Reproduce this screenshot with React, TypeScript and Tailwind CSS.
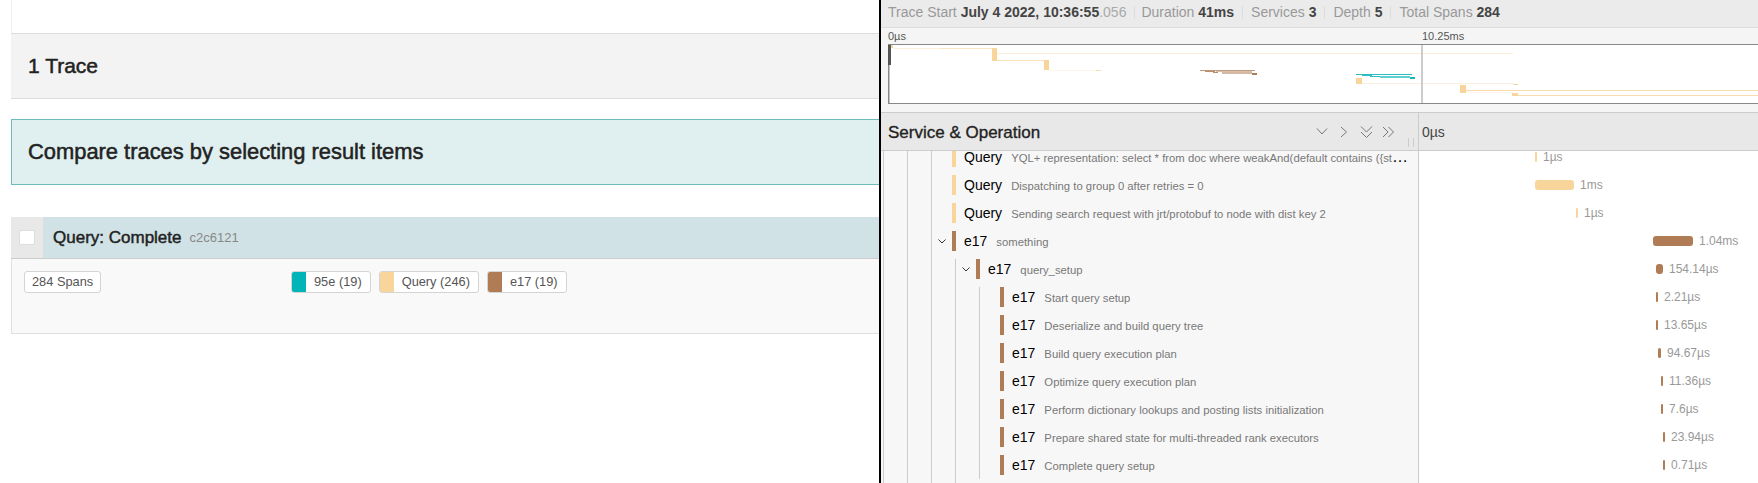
const rows = [
  { depth: 3, service: 'Query', op: 'YQL+ representation: select * from doc where weakAnd(default contains ({stem: false, normalizeCase: false, accentDrop: false}"something"))', color: 'bg-[#f8d59b]', left: 116, width: 2, label: '1µs' },
  { depth: 3, service: 'Query', op: 'Dispatching to group 0 after retries = 0', color: 'bg-[#f8d59b]', left: 116, width: 39, label: '1ms' },
  { depth: 3, service: 'Query', op: 'Sending search request with jrt/protobuf to node with dist key 2', color: 'bg-[#f8d59b]', left: 157, width: 2, label: '1µs' },
  { depth: 3, service: 'e17', op: 'something', color: 'bg-[#b07c55]', left: 234, width: 40, label: '1.04ms', open: true },
  { depth: 4, service: 'e17', op: 'query_setup', color: 'bg-[#b07c55]', left: 237, width: 7, label: '154.14µs', open: true, first: true },
  { depth: 5, service: 'e17', op: 'Start query setup', color: 'bg-[#b07c55]', left: 237, width: 2, label: '2.21µs', first: true },
  { depth: 5, service: 'e17', op: 'Deserialize and build query tree', color: 'bg-[#b07c55]', left: 237, width: 2, label: '13.65µs' },
  { depth: 5, service: 'e17', op: 'Build query execution plan', color: 'bg-[#b07c55]', left: 239, width: 3, label: '94.67µs' },
  { depth: 5, service: 'e17', op: 'Optimize query execution plan', color: 'bg-[#b07c55]', left: 242, width: 2, label: '11.36µs' },
  { depth: 5, service: 'e17', op: 'Perform dictionary lookups and posting lists initialization', color: 'bg-[#b07c55]', left: 242, width: 2, label: '7.6µs' },
  { depth: 5, service: 'e17', op: 'Prepare shared state for multi-threaded rank executors', color: 'bg-[#b07c55]', left: 244, width: 2, label: '23.94µs' },
  { depth: 5, service: 'e17', op: 'Complete query setup', color: 'bg-[#b07c55]', left: 244, width: 2, label: '0.71µs', last: true },
]

const minimap = [
  [891, 45, 2, 3, '#f8d59b'],
  [893, 48, 47, 1, '#fdf0dc'],
  [940, 48, 52, 1, '#fbe6c4'],
  [992, 48, 5, 13, '#f8d59b'],
  [997, 53, 516, 1, '#fbeed8'],
  [997, 60, 47, 1, '#f9dfb5'],
  [1044, 60, 5, 10, '#f8d59b'],
  [1049, 70, 47, 1, '#fef6e8'],
  [1096, 70, 5, 1, '#f9dcae'],
  [1200, 70, 55, 1, '#c09a7c'],
  [1205, 71, 10, 1, '#b98c6a'],
  [1213, 72, 5, 1, '#b98c6a'],
  [1216, 71, 36, 1, '#d8bfac'],
  [1222, 72, 30, 2, '#d4b8a3'],
  [1252, 73, 5, 2, '#b07c55'],
  [1356, 74, 56, 1, '#2dbdc0'],
  [1362, 75, 10, 1, '#2dbdc0'],
  [1370, 76, 10, 1, '#2dbdc0'],
  [1380, 76, 30, 2, '#5fd0d2'],
  [1410, 77, 5, 2, '#1fb5b8'],
  [1356, 78, 6, 6, '#f8d59b'],
  [1362, 83, 151, 1, '#f9efdf'],
  [1513, 84, 5, 1, '#f8d59b'],
  [1460, 85, 6, 8, '#f8d59b'],
  [1466, 90, 292, 1, '#f8dcae'],
  [1466, 92, 47, 1, '#fdf6ea'],
  [1512, 93, 6, 3, '#f8d59b'],
  [1518, 95, 240, 1, '#f8dcae'],
] as const

function Stat({ label, value, muted }: { label: string; value: string; muted?: string }) {
  return (
    <div className="mr-[8px] border-r border-[#dcdcdc] pr-[8px] leading-[13px] first:mr-[6px] last:border-r-0">
      <span className="text-[#999]">{label} </span>
      <span className="font-bold text-[#444]">{value}</span>
      {muted && <span className="text-[#aaa]">{muted}</span>}
    </div>
  )
}

function Tag({ swatch, label }: { swatch?: string; label: string }) {
  return (
    <div className="flex h-[22px] items-stretch overflow-hidden rounded-[3px] border border-[#d4d4d4] bg-white text-[12.8px] text-[#555]">
      {swatch && <span className={`w-[14px] ${swatch}`} />}
      <span className={`flex items-center ${swatch ? 'px-[8px]' : 'px-[7px]'}`}>{label}</span>
    </div>
  )
}

function Row({ row }: { row: (typeof rows)[number] }) {
  return (
    <div className="flex h-[28px] shrink-0">
      <div className="flex w-[538px] shrink-0 overflow-hidden border-r border-[#ccc] bg-[#f7f7f7] pl-[2px]">
        {Array.from({ length: row.depth - 1 }).map((_, i) => (
          <span key={i} className="w-[24px] shrink-0 border-l border-[#ccc]" />
        ))}
        <span
          className={`w-[21px] shrink-0 border-l border-[#ccc] ${row.first ? '-mt-[4px] pt-[4px]' : ''} ${row.last ? 'mb-[4px]' : ''}`}
        >
          <span className="flex h-[20px] items-center justify-center">
            {row.open && (
              <svg width="8" height="5" viewBox="0 0 8 5" fill="none" stroke="#333" strokeWidth="1">
                <path d="M0.5 0.5L4 4L7.5 0.5" />
              </svg>
            )}
          </span>
        </span>
        <span className={`h-[20px] w-[4px] shrink-0 ${row.color}`} />
        <div className="h-[20px] min-w-0 flex-1 truncate pl-[8px] pr-[6px] leading-[20px] text-black">
          <span className="text-[14px]">{row.service}</span>
          <span className="ml-[9px] text-[11.3px] text-[#777]">{row.op}</span>
        </div>
      </div>
      <div className="flex h-[20px] flex-1 items-center bg-white">
        <span className={`h-[10px] shrink-0 rounded-[3px] ${row.color}`} style={{ marginLeft: row.left, width: row.width }} />
        <span className="ml-[6px] text-[12px] text-[#999]">{row.label}</span>
      </div>
    </div>
  )
}

export default function App() {
  return (
    <div className="flex h-[483px] w-[1758px] overflow-hidden bg-white font-['Liberation_Sans',Arial,sans-serif]">
      <div className="w-[879px] shrink-0 pl-[11px]">
        <div className="h-[33px] border-l border-[#eee]" />
        <div className="flex h-[66px] items-center border-y border-[#ddd] bg-[#f3f3f3] pl-[17px] text-[21px] text-[#222] [-webkit-text-stroke:0.5px_#222]">
          1 Trace
        </div>
        <div className="mt-[20px] flex h-[66px] items-center border border-r-0 border-[#6cbdb9] bg-[#e0efef] pl-[16px] text-[21.9px] text-[#222] [-webkit-text-stroke:0.5px_#222]">
          Compare traces by selecting result items
        </div>
        <div className="mt-[32px]">
          <div className="flex h-[42px] border-b border-[#ccc] bg-[#d0e2e5]">
            <div className="flex w-[33px] shrink-0 items-center justify-center border-r border-[#ddd] bg-[#e8e8e8]">
              <span className="h-[15px] w-[16px] rounded-[2px] border border-[#ddd] bg-white" />
            </div>
            <div className="flex items-center pl-[9px] pt-[1px]">
              <span className="text-[17px] text-[#222] [-webkit-text-stroke:0.45px_#222]">Query: Complete</span>
              <span className="ml-[8px] text-[13px] text-[#888]">c2c6121</span>
            </div>
          </div>
          <div className="flex h-[75px] border-b border-l border-[#e0e0e0] bg-[#f9f9f9] pl-[12px] pt-[12px]">
            <div className="w-[267px] shrink-0">
              <div className="flex">
                <Tag label="284 Spans" />
              </div>
            </div>
            <div className="flex gap-[8px]">
              <Tag swatch="bg-[#00b4b8]" label="95e (19)" />
              <Tag swatch="bg-[#f8d59b]" label="Query (246)" />
              <Tag swatch="bg-[#b07c55]" label="e17 (19)" />
            </div>
          </div>
        </div>
      </div>

      <div className="flex min-w-0 flex-1 flex-col border-l-2 border-black">
        <div className="flex h-[28px] shrink-0 items-center border-b border-[#ddd] bg-[#ebebeb] pb-[2px] pl-[7px] text-[14px]">
          <Stat label="Trace Start" value="July 4 2022, 10:36:55" muted=".056" />
          <Stat label="Duration" value="41ms" />
          <Stat label="Services" value="3" />
          <Stat label="Depth" value="5" />
          <Stat label="Total Spans" value="284" />
        </div>

        <div className="flex h-[16px] shrink-0 items-center bg-[#f5f5f5] pl-[7px] text-[11px] text-[#555]">
          <span className="w-[534px]">0µs</span>
          <span>10.25ms</span>
        </div>

        <div className="shrink-0 bg-[#f5f5f5] pb-[8px] pl-[7px]">
          <svg className="block h-[60px] w-[870px]" viewBox="888 44 870 60">
            <rect x="888" y="44" width="870" height="60" fill="#fff" />
            {minimap.map(([x, y, w, h, fill], i) => (
              <rect key={i} x={x} y={y} width={w} height={h} fill={fill} />
            ))}
            <rect x="1421" y="45" width="2" height="58" fill="#ccc" />
            <rect x="888" y="44" width="870" height="1" fill="#888" />
            <rect x="888" y="103" width="870" height="1" fill="#888" />
            <rect x="888" y="44" width="1.5" height="60" fill="#888" />
            <rect x="888" y="45" width="3" height="20" fill="#555" />
          </svg>
        </div>

        <div className="flex h-[39px] shrink-0 border-y border-[#ccc] bg-[#e8e8e8]">
          <div className="relative flex w-[538px] shrink-0 items-center border-r border-[#ccc] pl-[7px] pt-[2px] text-[17px] text-[#222] [-webkit-text-stroke:0.35px_#222]">
            Service &amp; Operation
            <svg className="absolute left-[435px] top-[11px]" width="80" height="16" viewBox="0 0 80 16" fill="none" stroke="#777" strokeWidth="1">
              <path d="M1 4.5L6 10L11 4.5" />
              <path d="M25 3L30.5 8L25 13" />
              <path d="M45 2.5L50.5 8L56 2.5M45 8L50.5 13.5L56 8" />
              <path d="M67 3L72 8L67 13M72.5 3L77.5 8L72.5 13" />
            </svg>
            <span className="absolute bottom-[3px] left-[527px] h-[9px] w-[6px] border-x border-[#ccc]" />
          </div>
          <div className="flex items-center pl-[3px] pt-[1px] text-[14px] text-[#444]">0µs</div>
        </div>

        <div className="min-h-0 flex-1 overflow-hidden">
          <div className="-mt-[4px] flex flex-col">
            {rows.map((row) => (
              <Row key={row.op} row={row} />
            ))}
          </div>
        </div>
      </div>
    </div>
  )
}
